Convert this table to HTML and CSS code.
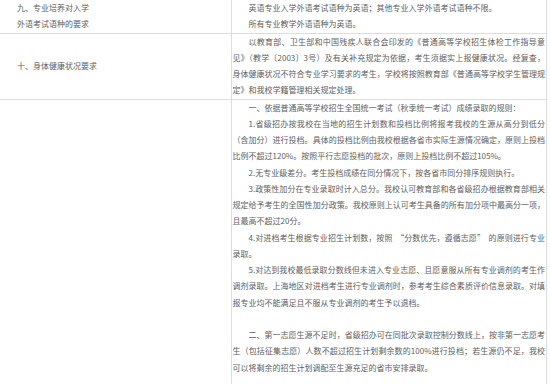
FILE: index.html
```html
<!DOCTYPE html>
<html lang="zh">
<head>
<meta charset="utf-8">
<link rel="stylesheet" href="styles.css">
</head>
<body>
<table class="rules">
  <colgroup>
    <col class="col-label">
    <col class="col-detail">
  </colgroup>
  <tr>
    <td class="label">九、专业培养对入学<br>外语考试语种的要求</td>
    <td class="detail">
      <p class="ind">英语专业入学外语考试语种为英语；其他专业入学外语考试语种不限。</p>
      <p class="ind">所有专业教学外语语种为英语。</p>
    </td>
  </tr>
  <tr>
    <td class="label">十、身体健康状况要求</td>
    <td class="detail">
      <p class="ind">以教育部、卫生部和中国残疾人联合会印发的《普通高等学校招生体检工作指导意见》（教学〔2003〕3号）及有关补充规定为依据，考生须据实上报健康状况。经复查，身体健康状况不符合专业学习要求的考生，学校将按照教育部《普通高等学校学生管理规定》和我校学籍管理相关规定处理。</p>
    </td>
  </tr>
  <tr>
    <td class="label"></td>
    <td class="detail">
      <p class="ind">一、依据普通高等学校招生全国统一考试（秋季统一考试）成绩录取的规则：</p>
      <p class="ind">1.省级招办按我校在当地的招生计划数和投档比例将报考我校的生源从高分到低分（含加分）进行投档。具体的投档比例由我校根据各省市实际生源情况确定，原则上投档比例不超过120%。按照平行志愿投档的批次，原则上投档比例不超过105%。</p>
      <p class="ind">2.无专业级差分。考生投档成绩在同分情况下，按各省市同分排序规则执行。</p>
      <p class="ind">3.政策性加分在专业录取时计入总分。我校认可教育部和各省级招办根据教育部相关规定给予考生的全国性加分政策。我校原则上认可考生具备的所有加分项中最高分一项，且最高不超过20分。</p>
      <p class="ind">4.对进档考生根据专业招生计划数，按照<span class="quote">“分数优先，遵循志愿”</span>的原则进行专业录取。</p>
      <p class="ind">5.对达到我校最低录取分数线但未进入专业志愿、且愿意服从所有专业调剂的考生作调剂录取。上海地区对进档考生进行专业调剂时，参考考生综合素质评价信息录取。对填报专业均不能满足且不服从专业调剂的考生予以退档。</p>
      <p class="blank">&nbsp;</p>
      <p class="ind">二、第一志愿生源不足时，省级招办可在同批次录取控制分数线上，按非第一志愿考生（包括征集志愿）人数不超过招生计划剩余数的100%进行投档；若生源仍不足，我校可以将剩余的招生计划调配至生源充足的省市安排录取。</p>
      <p class="blank">&nbsp;</p>
    </td>
  </tr>
</table>
</body>
</html>
```

FILE: styles.css
```css
html, body {
  margin: 0;
  padding: 0;
  background: #ffffff;
}

body {
  font-family: "Noto Sans CJK SC", "Noto Sans", sans-serif;
  font-size: 8px;
  line-height: 16.25px;
  color: #606060;
}

.rules {
  border-collapse: collapse;
  table-layout: fixed;
  width: 547px;
}

.col-label {
  width: 231px;
}

.rules td {
  border-top: 1px solid #dddddd;
  border-bottom: 1px solid #dddddd;
  padding: 0;
  vertical-align: middle;
}

.rules tr:first-child td {
  border-top: none;
}

.rules td.label {
  padding-left: 17px;
  border-right: 1px solid #dddddd;
}

.rules td.detail {
  padding: 0 1px;
  border-right: 1px solid #dddddd;
  text-align: justify;
}

.detail p {
  margin: 0;
}

.ind {
  text-indent: 2em;
}

.quote {
  margin: 0 0.45em;
}
```
